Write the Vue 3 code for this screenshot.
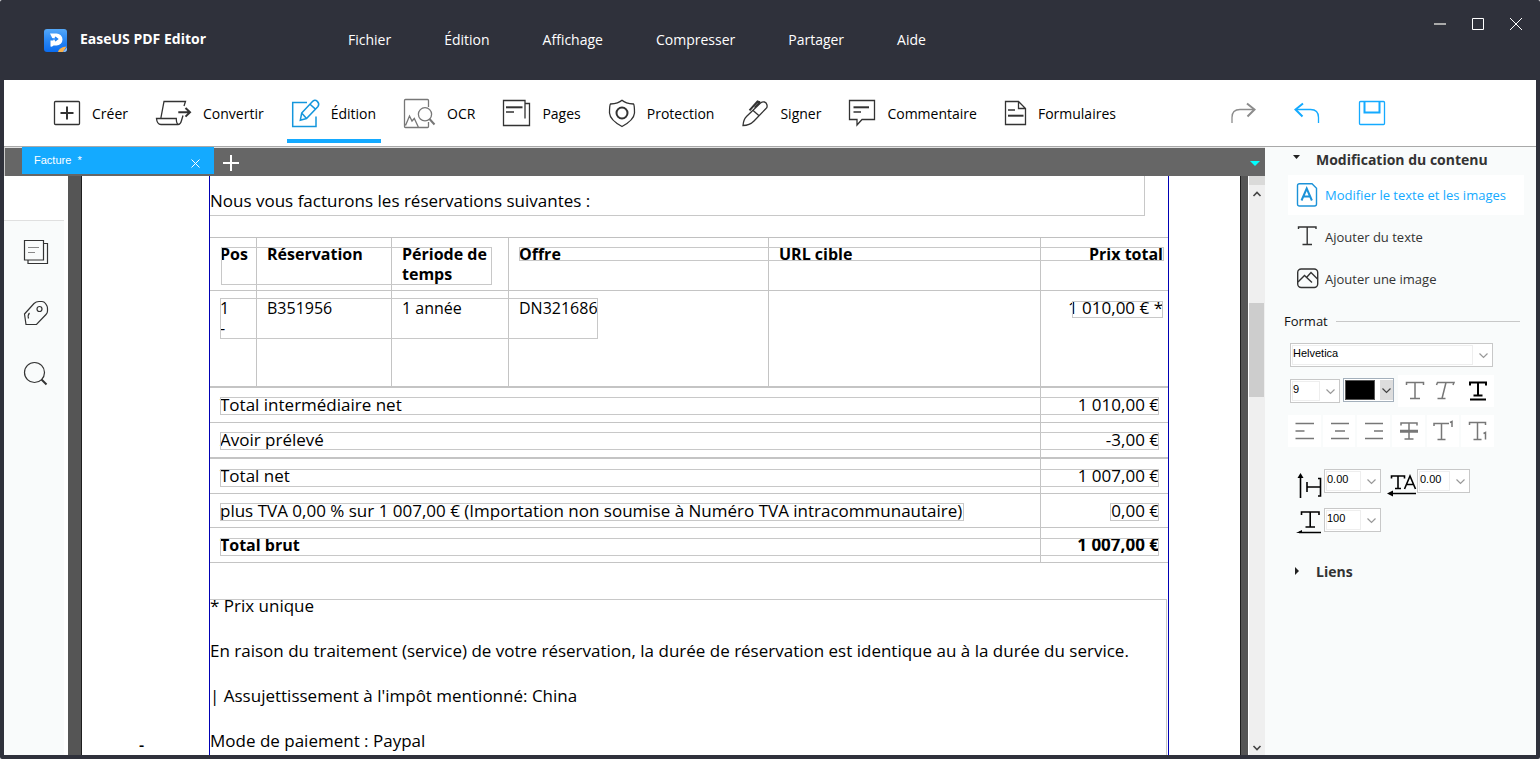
<template>
  <div class="window">
    <header class="titlebar">
      <div class="brand">
        <svg class="logo" viewBox="0 0 23 23">
          <defs>
            <linearGradient id="logo-bg" x1="0" y1="0" x2="0" y2="1">
              <stop offset="0" stop-color="#55a8f8" />
              <stop offset="0.45" stop-color="#2c8af5" />
              <stop offset="1" stop-color="#0a6cf0" />
            </linearGradient>
          </defs>
          <rect width="23" height="23" rx="3" fill="url(#logo-bg)" />
          <path d="M6 4.500h6.500a5.500 5.500 0 0 1 0 12H9.500q-1 1.500-3 1v-6h3z" fill="#fff" />
          <path d="M6.500 10h7M11 8l2.500 2-2.500 2" fill="none" stroke="#2383f3" stroke-width="1.500" />
          <path d="M22.500 17.500L19 23h-5c1-3.500 4-5 8.500-5.500z" fill="#f7b04e" />
          <path d="M23 18.500V20a3 3 0 0 1-3 3h-1z" fill="#8fc0f8" />
        </svg>
        <strong>EaseUS PDF Editor</strong>
      </div>
      <nav class="menus">
        <button v-for="menu in menus" :key="menu" type="button">{{ menu }}</button>
      </nav>
      <div class="window-buttons">
        <button type="button" aria-label="Réduire">
          <svg viewBox="0 0 12 12"><path d="M0 6h12" stroke="#aaa" stroke-width="2" /></svg>
        </button>
        <button type="button" aria-label="Agrandir">
          <svg viewBox="0 0 12 12"><path d="M.5 .5h11v11h-11z" /></svg>
        </button>
        <button type="button" aria-label="Fermer">
          <svg viewBox="0 0 12 12"><path d="M0 0l12 12M12 0L0 12" /></svg>
        </button>
      </div>
    </header>

    <div class="toolbar">
      <button
        v-for="tool in tools"
        :key="tool.label"
        type="button"
        class="tool"
        :class="{ active: tool.label === activeTool, pale: tool.pale }"
        @click="activeTool = tool.label"
      >
        <svg :width="tool.width" height="30" :viewBox="`0 -1 ${tool.width} 30`">
          <path :d="tool.outline" />
          <path v-if="tool.bold" :d="tool.bold" class="bold" />
        </svg>
        <span>{{ tool.label }}</span>
      </button>
      <div class="history">
        <button type="button" aria-label="Rétablir" class="redo">
          <svg width="24" height="28" viewBox="0 0 24 28">
            <path d="M1 24v-5.500q0-8 8-8h14" />
            <path d="M16 4.500l7.500 6-7 7" class="bold" />
          </svg>
        </button>
        <button type="button" aria-label="Annuler">
          <svg width="24" height="28" viewBox="0 0 24 28">
            <path d="M23.500 24v-5.500q0-8-8-8H1" />
            <path d="M8 4.500l-7.500 6 7 7" class="bold" />
          </svg>
        </button>
        <button type="button" aria-label="Enregistrer">
          <svg width="26" height="28" viewBox="0 0 26 28">
            <rect x=".5" y="2.500" width="25" height="23" rx="1" />
            <path d="M5.500 2.500v11h15v-11" class="bold" />
          </svg>
        </button>
      </div>
    </div>

    <div class="workspace">
      <div class="main">
        <div class="tabs">
          <div class="tab">
            <span>Facture&nbsp; *</span>
            <button type="button" aria-label="Fermer l'onglet">
              <svg width="9" height="9" viewBox="0 0 9 9"><path d="M.5 .5l8 8M8.500 .5l-8 8" /></svg>
            </button>
          </div>
          <button type="button" class="new-tab" aria-label="Nouvel onglet">
            <svg width="16" height="16" viewBox="0 0 16 16"><path d="M8 0v16M0 8h16" /></svg>
          </button>
          <button type="button" class="tab-list" aria-label="Liste des onglets">
            <svg width="10" height="5" viewBox="0 0 10 5"><path d="M0 0h10L5 5z" /></svg>
          </button>
        </div>

        <div class="viewer">
          <aside class="rail">
            <div class="rail-head"></div>
            <div class="rail-body">
              <button type="button" aria-label="Pages">
                <svg width="24" height="24" viewBox="0 0 24 24">
                  <path d="M.5 .5h19v19.500H.5zM19.500 3.500h4v20H4v-3.500" />
                  <path d="M4 7.500h11M4 12.500h7" class="faint" />
                </svg>
              </button>
              <button type="button" aria-label="Signets">
                <svg width="24" height="24" viewBox="0 0 24 24">
                  <path d="M.5 13L10 2.500Q12 .5 15 .5h3q2 0 3.500 2L23 5q.5 1 .5 3v2q0 2-1.500 3.500L12.500 23.500H2z" />
                  <circle cx="15.500" cy="8" r="2.500" />
                  <path d="M5.500 12q-2 2-1 5.500" />
                </svg>
              </button>
              <button type="button" aria-label="Rechercher">
                <svg width="24" height="24" viewBox="0 0 24 24">
                  <circle cx="10.500" cy="10.500" r="10" />
                  <path d="M17.500 17.500l5 5" class="thick" />
                </svg>
              </button>
            </div>
          </aside>

          <div class="canvas">
            <article class="page">
              <div class="page-margin">-</div>
              <div class="frame">
                <p class="intro">Nous vous facturons les réservations suivantes :</p>
                <div class="invoice">
                  <table>
                    <colgroup>
                      <col class="c-pos" />
                      <col class="c-booking" />
                      <col class="c-period" />
                      <col class="c-offer" />
                      <col />
                      <col class="c-price" />
                    </colgroup>
                    <thead>
                      <tr class="head">
                        <th>Pos</th>
                        <th>Réservation</th>
                        <th>Période de temps</th>
                        <th>Offre</th>
                        <th>URL cible</th>
                        <th class="amount">Prix total</th>
                      </tr>
                    </thead>
                    <tbody>
                      <tr class="item">
                        <td>1<br />-</td>
                        <td>B351956</td>
                        <td>1 année</td>
                        <td>DN321686</td>
                        <td></td>
                        <td class="amount">1 010,00 € *</td>
                      </tr>
                      <tr v-for="row in totals" :key="row.label" class="total" :class="row.kind">
                        <td colspan="5">{{ row.label }}</td>
                        <td class="amount">{{ row.amount }}</td>
                      </tr>
                    </tbody>
                  </table>
                  <!-- editable text blocks -->
                  <i v-for="block in blocks" :key="block" class="block" :class="block"></i>
                </div>
                <div class="notes">
                  <p v-for="note in notes" :key="note">{{ note }}</p>
                </div>
              </div>
            </article>
          </div>

          <div class="scrollbar">
            <div class="scroll-cap"></div>
            <svg width="8" height="6" viewBox="0 0 8 6"><path d="M.5 5L4 1.500 7.500 5" /></svg>
            <div class="track">
              <div class="thumb"></div>
            </div>
            <svg width="8" height="6" viewBox="0 0 8 6"><path d="M.5 1L4 4.500 7.500 1" /></svg>
          </div>
        </div>
      </div>

      <aside class="panel">
        <h2>
          <svg class="marker" width="8" height="8" viewBox="0 0 8 8"><path d="M1 0h7L4.500 4z" /></svg>
          Modification du contenu
        </h2>
        <div class="actions">
          <button type="button" class="selected">
            <svg width="22" height="24" viewBox="0 0 22 24">
              <path d="M2.500 .7h12.500l4.500 4.500v15.800q0 2-2 2H2.500q-2 0-2-2V2.700q0-2 2-2z" />
              <path d="M4.500 17.500l5.200-12 5.200 12M6.500 13.500h6.500" class="thick" />
            </svg>
            Modifier le texte et les images
          </button>
          <button type="button">
            <svg width="22" height="24" viewBox="0 0 22 24">
              <path d="M1.500 4V2h17.500v2M10.200 2v17.500M5.500 19.500H15" />
            </svg>
            Ajouter du texte
          </button>
          <button type="button">
            <svg width="22" height="24" viewBox="0 0 22 24">
              <rect x=".7" y="2" width="20" height="18.500" rx="3.500" />
              <path d="M1 15l6.500-6.500 7.500 7M9.500 10.500l4.500-5 6.500 6.500" />
            </svg>
            Ajouter une image
          </button>
        </div>

        <div class="format-title"><span>Format</span></div>

        <div class="format">
          <div class="row">
            <div class="combo font">
              <select aria-label="Police"><option>Helvetica</option></select>
              <svg viewBox="0 0 9 5"><path d="M.5 .5l4 4 4-4" /></svg>
            </div>
          </div>
          <div class="row style-row">
            <div class="combo size">
              <select aria-label="Taille"><option>9</option></select>
              <svg viewBox="0 0 9 5"><path d="M.5 .5l4 4 4-4" /></svg>
            </div>
            <button type="button" class="color" aria-label="Couleur du texte">
              <span class="swatch"></span>
              <span class="drop"><svg viewBox="0 0 9 5"><path d="M.5 .5l4 4 4-4" /></svg></span>
            </button>
            <div class="styles">
              <button v-for="icon in styleIcons" :key="icon.name" type="button" :aria-label="icon.name">
                <svg :class="{ dark: icon.dark }" width="20" height="20" viewBox="0 0 20 20"><path :d="icon.d" /></svg>
              </button>
            </div>
          </div>
          <div class="row aligns">
            <button v-for="icon in alignIcons" :key="icon.name" type="button" :aria-label="icon.name">
              <svg width="20" height="20" viewBox="0 0 20 20"><path :d="icon.d" /></svg>
            </button>
          </div>
          <div class="spacing">
            <svg width="26" height="26" viewBox="0 0 26 26">
              <path d="M3.500 26V4M10 10v10M10 15h13.500M21 6.500h2.500v17.500H21" />
              <path d="M3.500 1l3 5h-6z" class="fill" />
            </svg>
            <div class="combo number">
              <select aria-label="Interligne"><option>0.00</option></select>
              <svg viewBox="0 0 9 5"><path d="M.5 .5l4 4 4-4" /></svg>
            </div>
            <svg width="30" height="26" viewBox="0 0 30 26">
              <path d="M5.500 6.500V4h13v2.500M12 4v12.500M9 16.500h6M18.500 17l5.500-13 5.500 13M20.500 12.500h7.500M5 21.500h25" />
              <path d="M1 21.500l6-3v6z" class="fill" />
            </svg>
            <div class="combo number">
              <select aria-label="Espacement des caractères"><option>0.00</option></select>
              <svg viewBox="0 0 9 5"><path d="M.5 .5l4 4 4-4" /></svg>
            </div>
            <svg width="26" height="26" viewBox="0 2 26 26">
              <path d="M4.500 6V3h17.500v3M13.200 3v15M8.500 18h9.500M2 23.500h22" />
              <path d="M-1 24l6-3v3z" class="fill" />
            </svg>
            <div class="combo number">
              <select aria-label="Échelle horizontale"><option>100</option></select>
              <svg viewBox="0 0 9 5"><path d="M.5 .5l4 4 4-4" /></svg>
            </div>
          </div>
        </div>

        <h2 class="links">
          <svg class="marker" width="8" height="8" viewBox="0 0 8 8"><path d="M3 0v8l4-4z" /></svg>
          Liens
        </h2>
      </aside>
    </div>
  </div>
</template>

<script setup>
import { ref } from 'vue'

const menus = ['Fichier', 'Édition', 'Affichage', 'Compresser', 'Partager', 'Aide']

const activeTool = ref('Édition')

const tools = [
  {
    label: 'Créer',
    width: 26,
    outline: 'M1.5 2.5h23q1 0 1 1v21q0 1-1 1h-23q-1 0-1-1v-21q0-1 1-1z',
    bold: 'M13 7.500v13M6.500 14h13',
  },
  {
    label: 'Convertir',
    width: 35,
    outline:
      'M28 7l1.500-4.500H8L4.800 19.500M.5 19.500h19.800q0 5 2 6H5q-4 0-4.500-6zM22 25.500q2.500 0 3.500-4l1.500-5',
    bold: 'M22.300 13.300H34M29.500 9l4.500 4.300-4.500 4.300',
  },
  {
    label: 'Édition',
    width: 27,
    outline:
      'M15 3.500H.7v24H24v-10M9.700 14L20 3q2.800-3 5.300-.6t.7 5.100L14.500 19.500 8.300 21.300zM18 5.200l5.200 4.700M9.700 14l4.800 5.500',
  },
  {
    label: 'OCR',
    width: 31,
    pale: true,
    outline:
      'M24.500 8V1.500q0-1-1-1h-22q-1 0-1 1v26q0 1 1 1h22q1 0 1-1V23M1.500 26.500l4-9.500 2.500 5 2.300-2.500 4 8.500M27.600 15.300a6.600 6.600 0 1 1-13.200 0a6.600 6.600 0 1 1 13.200 0z',
    bold: 'M25.500 20l5 5.500',
  },
  {
    label: 'Pages',
    width: 27,
    outline: 'M22 19.500V1.500H.5v25h26V4.500H22M3 13h8',
    bold: 'M3 8.300h16.500',
  },
  {
    label: 'Protection',
    width: 26,
    outline: 'M13 1.300Q9.500 4.500 1.500 5Q.5 6 .5 14q.5 7 12.500 13.500Q25 21 25.500 14q0-8-1-9Q16.500 4.500 13 1.300z',
    bold: 'M18.500 14a5.500 5.500 0 1 1-11 0a5.500 5.500 0 1 1 11 0z',
  },
  {
    label: 'Signer',
    width: 26,
    outline:
      'M1 26.500q.5-6 3.500-9L18.500 4q2-1.500 4-1t2.500 3-1 3.500L12 22q-4.500 4.500-11 4.500zM10.800 11.300l6 5.200M12.500 8.500l5.500-6',
    bold: 'M7.500 11.300L15.500 2.500l2.500 1',
  },
  {
    label: 'Commentaire',
    width: 26,
    outline: 'M.5 1.500h25v19H13l-5 5.500v-5.500H.5zM4.500 13h7.500',
    bold: 'M4.500 8.300H20',
  },
  {
    label: 'Formulaires',
    width: 21,
    outline: 'M.5 2.500h13l7 7v16H.5zM13.500 2.500v7h7M3 11h7',
    bold: 'M3 16.700h15.500',
  },
]

const totals = [
  { label: 'Total intermédiaire net', amount: '1 010,00 €' },
  { label: 'Avoir prélevé', amount: '-3,00 €', kind: 'ruled' },
  { label: 'Total net', amount: '1 007,00 €' },
  {
    label: 'plus TVA 0,00 % sur 1 007,00 € (Importation non soumise à Numéro TVA intracommunautaire)',
    amount: '0,00 €',
    kind: 'vat',
  },
  { label: 'Total brut', amount: '1 007,00 €', kind: 'strong' },
]

const blocks = [
  'head-left',
  'head-right',
  'item-left',
  'item-price',
  'sum-1',
  'sum-2',
  'sum-3',
  'vat-label',
  'vat-amount',
  'sum-5',
]

const notes = [
  '* Prix unique',
  'En raison du traitement (service) de votre réservation, la durée de réservation est identique au à la durée du service.',
  "| Assujettissement à l'impôt mentionné: China",
  'Mode de paiement : Paypal',
]

const styleIcons = [
  { name: 'Gras', d: 'M2.500 4V1.500h17V4M11 1.500v16M6 17.500h10' },
  { name: 'Italique', d: 'M.5 4l1-2.500h16.500l-1 2.500M10 1.500l-4 16M1.500 17.500h8' },
  { name: 'Souligné', d: 'M2 4.500V1.500h16v3M10 1.500v13M5.500 14.500h9M2 18.500h16', dark: true },
]

const alignIcons = [
  { name: 'Aligner à gauche', d: 'M1.500 2.500H20M1.500 10h9M1.500 17.500H20' },
  { name: 'Centrer', d: 'M2 2.500h18M6 10h10M2 17.500h18' },
  { name: 'Aligner à droite', d: 'M1 2.500h18M10 10h9M1 17.500h18' },
  { name: 'Barré', d: 'M3 4.500V2h16v2.500M11 2v16M6.500 18h9M2 9.500h18M2 11h18' },
  { name: 'Exposant', d: 'M1 5V2.500h15M8.500 2.500V18M4.500 18.500h8M17 1.500l2-1v5.500' },
  { name: 'Indice', d: 'M1.500 4V1.500h16V4M9.500 1.500V18M5.500 18.500h8M15.500 12.500l2-1v7' },
]
</script>

<style>
body {
  margin: 0;
  background: #fff;
}
</style>

<style scoped>
* {
  box-sizing: border-box;
}

button {
  margin: 0;
  padding: 0;
  border: 0;
  background: none;
  color: inherit;
  font: inherit;
  cursor: pointer;
}

svg {
  display: block;
  flex: none;
  overflow: visible;
  fill: none;
  stroke: currentColor;
}

.window {
  display: flex;
  flex-direction: column;
  height: 100vh;
  padding: 0 4px 4px;
  border-radius: 2px;
  background: #2f313b;
  font-family: 'Open Sans', 'Noto Sans', sans-serif;
  font-size: 14px;
  line-height: 20px;
  color: #000;
}

.titlebar {
  display: flex;
  flex: none;
  height: 80px;
  padding: 0 14px 0 40px;
  color: #fff;
}

.brand {
  display: flex;
  align-items: center;
  gap: 13px;
  width: 304px;
}

.brand strong {
  padding-bottom: 2px;
}

.logo {
  width: 23px;
  height: 23px;
  stroke: none;
}

.menus {
  display: flex;
  align-items: center;
  gap: 53px;
}

.window-buttons {
  display: flex;
  gap: 26px;
  height: 12px;
  margin: 18px 0 0 auto;
}

.window-buttons svg {
  width: 12px;
  height: 12px;
}

.toolbar {
  display: flex;
  flex: none;
  gap: 28px;
  height: 67px;
  padding: 0 151px 0 50px;
  border-bottom: 1px solid #a9a9a9;
  background: #fff;
}

.tool {
  position: relative;
  display: flex;
  align-items: center;
  gap: 12px;
}

.tool span {
  padding-top: 2px;
}

.tool svg {
  color: #333;
  stroke-width: 1.3;
}

.tool .bold,
.history .bold {
  stroke-width: 2;
}

.tool.active svg {
  color: #1496dc;
  stroke-width: 1.5;
}

.tool.pale svg {
  color: #777;
}

.tool.active::after {
  content: '';
  position: absolute;
  right: -5px;
  bottom: 3px;
  left: -5px;
  height: 4px;
  background: #14aaff;
}

.history {
  display: flex;
  align-items: center;
  gap: 40px;
  margin-left: auto;
  color: #14aaff;
}

.history svg {
  stroke-width: 1.3;
}

.redo {
  color: #8c8c8c;
}

.workspace {
  display: flex;
  flex: 1;
  min-height: 0;
}

.main {
  display: flex;
  flex: 1;
  flex-direction: column;
  min-width: 0;
}

.tabs {
  display: flex;
  flex: none;
  height: 29px;
  padding: 0 5px 0 17px;
  border-top: 1px solid #e2e2e2;
  border-left: 1px solid #ccc;
  background: #666;
  color: #fff;
}

.tab {
  display: flex;
  align-items: center;
  justify-content: space-between;
  width: 192px;
  height: 27px;
  margin-top: -1px;
  padding: 0 14px 0 12px;
  background: #14aaff;
  font-family: 'Liberation Sans', Arial, sans-serif;
  font-size: 11px;
}

.tab button {
  padding-top: 5px;
}

.tab span {
  padding-bottom: 2px;
}

.new-tab {
  margin-left: 9px;
  padding-top: 2px;
}

.new-tab svg {
  stroke-width: 2;
}

.tab-list {
  margin-left: auto;
  padding-top: 2px;
}

.tab-list svg {
  fill: #0ff;
  stroke: none;
}

.viewer {
  display: flex;
  flex: 1;
  min-height: 0;
}

.rail {
  display: flex;
  flex: none;
  flex-direction: column;
  width: 64px;
  padding-right: 4px;
  background: #fff;
  color: #333;
}

.rail-head {
  height: 45px;
  border-bottom: 1px solid #e0e0e0;
}

.rail-body {
  display: flex;
  flex: 1;
  flex-direction: column;
  align-items: center;
  gap: 37px;
  padding: 19px 0 0 4px;
  background: #f9fbfb;
}

.rail-body svg {
  stroke-width: 1.2;
}

.faint {
  stroke: #888;
}

.thick {
  stroke-width: 2;
}

.canvas {
  display: flex;
  flex: 1;
  min-width: 0;
  padding: 0 7px 0 13px;
  overflow: hidden;
  background: #555;
}

.page {
  display: flex;
  flex: 1;
  padding-right: 71px;
  border: solid #1e1e1e;
  border-width: 0 1px;
  background: #fff;
  font-size: 16px;
}

.page-margin {
  display: flex;
  flex: none;
  align-items: flex-end;
  width: 127px;
  padding-left: 57px;
  font-weight: 600;
}

.frame {
  flex: 1;
  min-width: 0;
  border: solid #0000b4;
  border-width: 0 1px;
}

p {
  margin: 0;
}

.intro {
  height: 40px;
  margin: 0 23px 21px 0;
  padding-top: 15px;
  border: solid #c8c8c8;
  border-width: 0 1px 1px 0;
  font-size: 17px;
}

.invoice {
  position: relative;
}

table {
  width: 100%;
  border-top: 1px solid #c0c0c0;
  border-spacing: 0;
  table-layout: fixed;
}

.c-pos {
  width: 47px;
}

.c-booking {
  width: 135px;
}

.c-period {
  width: 117px;
}

.c-offer {
  width: 260px;
}

.c-price {
  width: 127px;
}

th,
td {
  padding: 7px 0 0 10px;
  border: solid #c4c4c4;
  border-width: 0 1px 1px 0;
  text-align: left;
  vertical-align: top;
}

th {
  padding-top: 6px;
}

th:last-child,
td:last-child {
  border-right: 0;
}

.head {
  height: 53px;
}

.item {
  height: 97px;
}

.total {
  height: 35px;
  font-size: 17px;
}

.total.ruled {
  height: 36px;
}

.total.vat {
  height: 34px;
}

.item td,
.ruled td {
  border-bottom-width: 2px;
}

.amount {
  padding-right: 5px;
  text-align: right;
}

td.amount {
  font-size: 17px;
}

.total .amount {
  padding-right: 9px;
}

.total.strong {
  font-size: 16px;
  font-weight: 700;
}

/* outlines drawn over the table cells */
.block {
  position: absolute;
  border: 1px solid #c8c8c8;
}

.head-left {
  top: 10px;
  left: 11px;
  width: 271px;
  height: 38px;
}

.head-right {
  top: 10px;
  right: 4px;
  left: 309px;
  height: 14px;
}

.item-left {
  top: 61px;
  left: 10px;
  width: 378px;
  height: 41px;
}

.item-price {
  top: 64px;
  right: 5px;
  width: 91px;
  height: 17px;
}

.sum-1,
.sum-2,
.sum-3,
.sum-5 {
  right: 9px;
  left: 10px;
  height: 18px;
}

.sum-1 {
  top: 160px;
}

.sum-2 {
  top: 195px;
}

.sum-3 {
  top: 232px;
}

.sum-5 {
  top: 301px;
}

.vat-label,
.vat-amount {
  top: 266px;
  height: 18px;
}

.vat-label {
  left: 10px;
  width: 744px;
}

.vat-amount {
  right: 9px;
  width: 49px;
}

.notes {
  display: flex;
  flex-direction: column;
  gap: 33px;
  height: 200px;
  margin: 36px 1px 0 0;
  border: solid #c8c8c8;
  border-width: 1px 1px 0 0;
  font-size: 17px;
  line-height: 12px;
  white-space: nowrap;
}

.scrollbar {
  display: flex;
  flex: none;
  flex-direction: column;
  align-items: center;
  width: 17px;
  padding-bottom: 4px;
  border-left: 1px solid #fff;
  background: #efefef;
  color: #444;
}

.scrollbar svg {
  stroke-width: 1.6;
}

.scroll-cap {
  width: 100%;
  height: 9px;
  margin-bottom: 6px;
  background: #dadad9;
}

.track {
  flex: 1;
  width: 100%;
  padding: 106px 1px 0 0;
}

.thumb {
  height: 94px;
  background: #cdcdcd;
}

.panel {
  display: flex;
  flex: none;
  flex-direction: column;
  width: 271px;
  padding: 3px 12px 0 19px;
  background: #f9fbfb;
  color: #333;
}

h2 {
  display: flex;
  gap: 16px;
  margin: 0;
  padding-left: 8px;
  font-size: 14px;
  line-height: 20px;
}

.marker {
  margin-top: 5px;
  fill: #222;
  stroke: none;
}

.actions {
  display: flex;
  flex-direction: column;
  gap: 2px;
  margin-top: 5px;
  padding-left: 4px;
}

.actions button {
  display: flex;
  align-items: center;
  gap: 6px;
  height: 40px;
  padding-left: 9px;
  white-space: nowrap;
  font-size: 13px;
}

.actions svg {
  stroke-width: 1.4;
}

.actions .selected {
  background: #fff;
  color: #14aaff;
}

.selected svg {
  color: #1c92d8;
}

.format-title {
  display: flex;
  align-items: center;
  gap: 8px;
  margin: 12px 4px 0 0;
  color: #111;
  font-size: 13px;
}

.format-title::after {
  content: '';
  flex: 1;
  border-top: 1px solid #c8c8c8;
}

.format {
  display: flex;
  flex-direction: column;
  gap: 8px;
  margin-top: 12px;
  padding-left: 6px;
}

.row {
  display: flex;
}

.combo {
  display: flex;
  align-items: center;
  gap: 6px;
  height: 24px;
  padding: 1px 4px 1px 1px;
  border: 1px solid #c8c8c8;
  background: #fff;
}

.combo select {
  flex: 1;
  min-width: 0;
  height: 20px;
  margin: 0;
  padding: 0 0 5px;
  border: 1px solid #eee;
  border-radius: 0;
  appearance: none;
  background: #fff;
  color: #000;
  font-family: 'Liberation Sans', Arial, sans-serif;
  font-size: 11px;
}

.combo svg,
.drop svg {
  width: 9px;
  height: 5px;
  color: #999;
  stroke-width: 1.2;
}

.font {
  width: 203px;
}

.size {
  width: 50px;
}

.style-row {
  align-items: center;
}

.color {
  display: flex;
  width: 51px;
  height: 24px;
  margin: 0 4px 2px 3px;
  padding: 1px 0 1px 1px;
  border: 1px solid #a4b0bc;
  background: #fff;
}

.swatch {
  width: 30px;
  height: 20px;
  margin-right: 5px;
  border: 1px solid #555;
  background: #000;
}

.drop {
  display: flex;
  flex: 1;
  align-items: center;
  justify-content: center;
  background: #ddd;
}

.drop svg {
  color: #444;
}

.styles {
  display: flex;
  align-items: center;
  width: 96px;
  height: 32px;
  background: #fff;
}

.styles button,
.aligns button {
  display: flex;
  flex: 1;
  align-items: center;
  justify-content: center;
  height: 32px;
  color: #777;
}

.styles svg,
.aligns svg {
  stroke-width: 1.5;
}

.styles .dark {
  color: #000;
  stroke-width: 2;
}

.aligns {
  gap: 2px;
  width: 206px;
  margin-left: -2px;
}

.aligns button {
  background: #fff;
}

.spacing {
  display: grid;
  grid-template-columns: 26px 57px 34px 53px;
  align-items: start;
  gap: 10px 1px;
  margin-top: 14px;
  padding-left: 7px;
  color: #000;
}

.spacing > svg {
  justify-self: end;
  margin-top: 3px;
  stroke-width: 1.6;
}

.fill {
  fill: #000;
  stroke: none;
}

.links {
  margin-top: 25px;
}

@media (max-width: 1100px) {
  .menus {
    gap: 20px;
  }

  .history {
    gap: 16px;
  }
}
</style>
